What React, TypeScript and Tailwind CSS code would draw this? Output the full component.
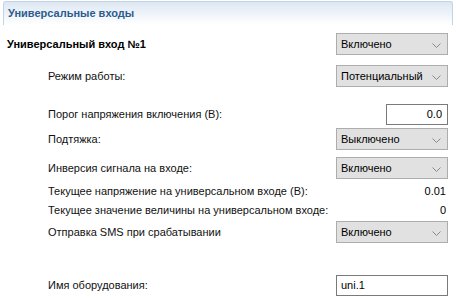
import React from "react";

const font = { fontFamily: '"Liberation Sans", Arial, sans-serif' };

function Chevron() {
  return (
    <svg width="9" height="5" viewBox="0 0 9 5" className="absolute right-[6px] top-[9px]">
      <path d="M0.5 0.5 L4.5 4.5 L8.5 0.5" fill="none" stroke="#8a8a8a" strokeWidth="1" />
    </svg>
  );
}

function Sel({ value }: { value: string }) {
  return (
    <div className="relative w-[112px] h-[22px] bg-[#e1e1e1] border border-[#adadad] flex items-center pl-[4px] text-[11px] text-black">
      {value}
      <Chevron />
    </div>
  );
}

function Inp({ value, w, right }: { value: string; w: string; right?: boolean }) {
  return (
    <div
      className={`${w} h-[21px] bg-white border border-[#7a7a7a] flex items-center text-[11px] text-black ${
        right ? "justify-end pr-[5px]" : "pl-[4px]"
      }`}
    >
      {value}
    </div>
  );
}

function Row({ label, children, h = "h-[22px]", bold }: { label: string; children: React.ReactNode; h?: string; bold?: boolean }) {
  return (
    <div className={`flex items-center justify-between ${h}`}>
      <span className={bold ? "pl-[7px] font-bold text-[11px]" : "pl-[48px] text-[11px] text-[#111]"}>{label}</span>
      {children}
    </div>
  );
}

export default function App() {
  return (
    <div style={font} className="w-[457px] h-[299px] bg-white text-black overflow-hidden">
      <div className="mt-[1px] ml-[3px] mr-[4px] h-[24px] rounded-t-[3px] border border-b-0 border-[#c3d4e8] bg-gradient-to-b from-[#dde7f2] to-white flex items-center pl-[4px] pb-[1px]">
        <span className="text-[11px] font-bold text-[#2c5c8f]">Универсальные входы</span>
      </div>
      <div className="pr-[9px]">
        <div className="mt-[8px]">
          <Row label="Универсальный вход №1" bold>
            <Sel value="Включено" />
          </Row>
        </div>
        <div className="mt-[10px]">
          <Row label="Режим работы:">
            <Sel value="Потенциальный" />
          </Row>
        </div>
        <div className="mt-[17px]">
          <Row label="Порог напряжения включения (В):" h="h-[21px]">
            <Inp value="0.0" w="w-[62px]" right />
          </Row>
        </div>
        <div className="mt-[3px]">
          <Row label="Подтяжка:">
            <Sel value="Выключено" />
          </Row>
        </div>
        <div className="mt-[7px]">
          <Row label="Инверсия сигнала на входе:">
            <Sel value="Включено" />
          </Row>
        </div>
        <div className="mt-[3px]">
          <Row label="Текущее напряжение на универсальном входе (В):" h="h-[19px]">
            <span className="text-[11px] pr-[2px]">0.01</span>
          </Row>
          <Row label="Текущее значение величины на универсальном входе:" h="h-[19px]">
            <span className="text-[11px] pr-[2px]">0</span>
          </Row>
        </div>
        <div className="mt-[1px]">
          <Row label="Отправка SMS при срабатывании">
            <Sel value="Включено" />
          </Row>
        </div>
        <div className="mt-[32px]">
          <Row label="Имя оборудования:" h="h-[21px]">
            <Inp value="uni.1" w="w-[112px]" />
          </Row>
        </div>
      </div>
    </div>
  );
}
